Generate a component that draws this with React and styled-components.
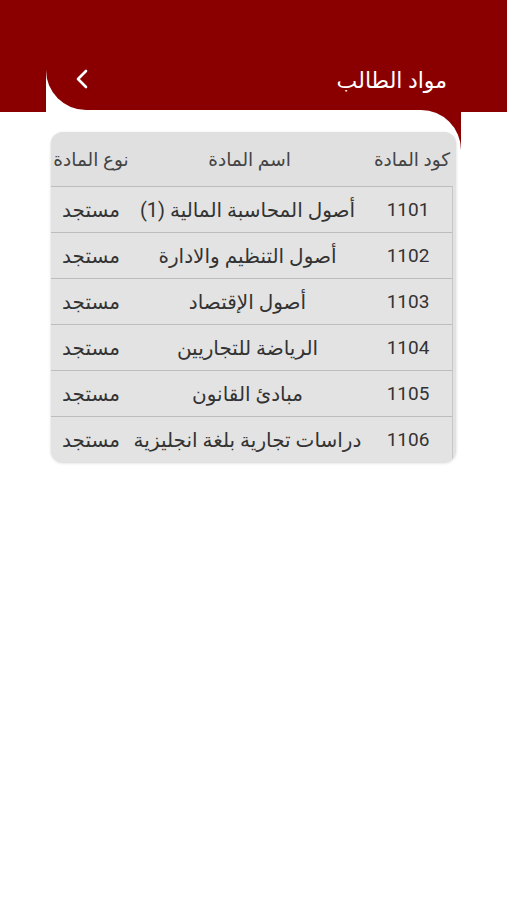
import React from "react";
import styled, { createGlobalStyle } from "styled-components";

const RED = "#8a0000";

const Global = createGlobalStyle`
  html, body { margin: 0; padding: 0; background: #fff; }
  body { font-family: Roboto, "DejaVu Sans", sans-serif; }
`;

const Page = styled.div`
  width: 100%;
  min-height: 900px;
  background: #fff;
`;

const TopBand = styled.div`
  height: 50px;
  background: ${RED};
`;

const Middle = styled.div`
  display: flex;
  align-items: flex-start;
`;

const SideStrip = styled.div`
  width: 46px;
  height: 62px;
  flex: none;
  background: ${RED};
`;

const Center = styled.div`
  flex: 1;
  min-width: 0;
  display: flex;
  flex-direction: column;
`;

const TitleBar = styled.div`
  height: 60px;
  background: ${RED};
  border-bottom-left-radius: 40px;
  display: flex;
  align-items: center;
  justify-content: space-between;
  padding: 0 14px 0 29px;
  box-sizing: border-box;
  direction: ltr;
`;

const BackButton = styled.button`
  background: none;
  border: none;
  padding: 0;
  margin-top: -2px;
  display: flex;
  cursor: pointer;
`;

const Title = styled.h1`
  margin: 0;
  color: #fff;
  font-size: 22px;
  font-weight: 500;
  direction: rtl;
`;

const BodyWrap = styled.div`
  background: linear-gradient(${RED} 0 40px, #fff 40px);
`;

const Body = styled.div`
  background: #fff;
  border-top-right-radius: 40px;
  padding: 22px 5px 0 5px;
`;

const Card = styled.div`
  direction: rtl;
  background: #e2e2e2;
  border-radius: 12px;
  box-shadow: 0 1px 3px rgba(0, 0, 0, 0.18);
  overflow: hidden;
  color: #333;
`;

const Row = styled.div`
  display: grid;
  grid-template-columns: 88px 1fr 80px;
  align-items: center;
  height: ${(p) => (p.$head ? "54px" : "46px")};
  box-sizing: border-box;
  margin-right: ${(p) => (p.$head ? "0" : "3px")};
  border-top: ${(p) => (p.$head ? "none" : "1.5px solid #bdbdbd")};
  border-right: ${(p) => (p.$head ? "none" : "1.5px solid #c6c6c6")};
  background: ${(p) => (p.$head ? "#e0e0e0" : "#e3e3e3")};
`;

const Cell = styled.div`
  text-align: center;
  white-space: nowrap;
  font-size: ${(p) => (p.$head ? "18.5px" : p.$code ? "19px" : "20px")};
  color: ${(p) => (p.$head ? "#444" : "#333")};
  padding-top: ${(p) => (p.$head ? "2px" : "0")};
`;

const subjects = [
  ["1101", "أصول المحاسبة المالية (1)", "مستجد"],
  ["1102", "أصول التنظيم والادارة", "مستجد"],
  ["1103", "أصول الإقتصاد", "مستجد"],
  ["1104", "الرياضة للتجاريين", "مستجد"],
  ["1105", "مبادئ القانون", "مستجد"],
  ["1106", "دراسات تجارية بلغة انجليزية", "مستجد"],
];

export default function App() {
  return (
    <Page>
      <Global />
      <TopBand />
      <Middle>
        <SideStrip />
        <Center>
          <TitleBar>
            <BackButton aria-label="back">
              <svg width="14" height="20" viewBox="0 0 14 20" fill="none">
                <polyline
                  points="11,2 3,10 11,18"
                  stroke="#fff"
                  strokeWidth="2.6"
                  strokeLinecap="round"
                  strokeLinejoin="round"
                />
              </svg>
            </BackButton>
            <Title>مواد الطالب</Title>
          </TitleBar>
          <BodyWrap>
            <Body>
              <Card>
                <Row $head>
                  <Cell $head>كود المادة</Cell>
                  <Cell $head>اسم المادة</Cell>
                  <Cell $head>نوع المادة</Cell>
                </Row>
                {subjects.map(([code, name, type]) => (
                  <Row key={code}>
                    <Cell $code>{code}</Cell>
                    <Cell>{name}</Cell>
                    <Cell>{type}</Cell>
                  </Row>
                ))}
              </Card>
            </Body>
          </BodyWrap>
        </Center>
        <SideStrip />
      </Middle>
    </Page>
  );
}
